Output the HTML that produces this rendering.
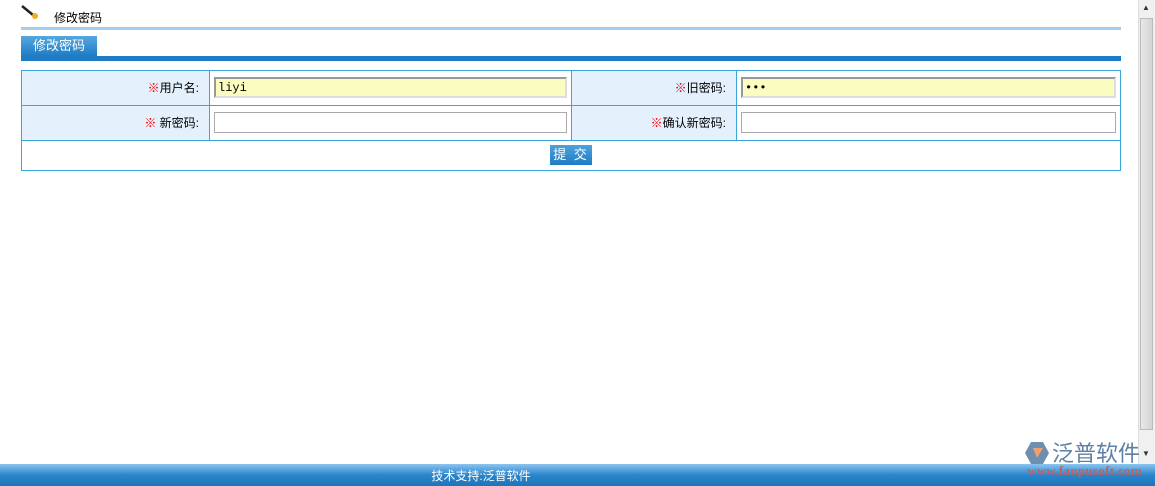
<!DOCTYPE html>
<html><head><meta charset="utf-8"><style>
body{margin:0;width:1155px;height:486px;position:relative;overflow:hidden;background:#fff;font-family:"Liberation Sans","Noto Sans CJK SC",sans-serif;font-size:12px;color:#000}
.a{position:absolute}
.lbl{background:#e4f1fd;text-align:right;box-sizing:border-box;padding-right:10px;line-height:34px}
.r{color:#e00}
input{position:absolute;box-sizing:border-box;height:21px;border:1px solid #aaa;font-family:"Liberation Mono",monospace;font-size:12px;padding:0 2px}
.y{background:#fafcc0;border:2px solid #999;border-right-color:#ddd;border-bottom-color:#ddd}
</style></head><body>
<svg class="a" style="left:20px;top:4px" width="20" height="16"><line x1="2" y1="2" x2="13" y2="11" stroke="#222" stroke-width="2.5"/><circle cx="15" cy="12" r="3" fill="#f0b020"/></svg>
<div class="a" style="left:54px;top:9px">修改密码</div>
<div class="a" style="left:21px;top:27px;width:1100px;height:3px;background:#a6cdec"></div>
<div class="a" style="left:21px;top:36px;width:76px;height:20px;background:linear-gradient(#55a7e0,#1f7cc4);color:#fff;font-size:13px;line-height:20px;text-align:center">修改密码</div>
<div class="a" style="left:21px;top:56px;width:1100px;height:5px;background:#1f7cc4"></div>
<div class="a" style="left:21px;top:70px;width:1100px;height:101px;box-sizing:border-box;border:1px solid #3aa6dc"></div>
<div class="a lbl" style="left:22px;top:71px;width:187px;height:34px"><span class="r">※</span>用户名:</div>
<div class="a lbl" style="left:572px;top:71px;width:164px;height:34px"><span class="r">※</span>旧密码:</div>
<div class="a lbl" style="left:22px;top:106px;width:187px;height:34px"><span class="r">※</span> 新密码:</div>
<div class="a lbl" style="left:572px;top:106px;width:164px;height:34px"><span class="r">※</span>确认新密码:</div>
<div class="a" style="left:21px;top:105px;width:1100px;height:1px;background:#3aa6dc"></div>
<div class="a" style="left:21px;top:140px;width:1100px;height:1px;background:#3aa6dc"></div>
<div class="a" style="left:209px;top:70px;width:1px;height:70px;background:#3aa6dc"></div>
<div class="a" style="left:571px;top:70px;width:1px;height:70px;background:#3aa6dc"></div>
<div class="a" style="left:736px;top:70px;width:1px;height:70px;background:#3aa6dc"></div>
<input class="y" style="left:214px;top:77px;width:353px" value="liyi">
<input class="y" style="left:741px;top:77px;width:375px" value="•••">
<input style="left:214px;top:112px;width:353px">
<input style="left:741px;top:112px;width:375px">
<div class="a" style="left:550px;top:145px;width:42px;height:20px;background:linear-gradient(#4ea2dc,#1f7cc4);color:#fff;font-size:13px;line-height:20px;text-align:center;letter-spacing:2px">提 交</div>
<div class="a" style="left:1138px;top:0;width:17px;height:464px;background:#f0f0f0;border-left:1px solid #ddd"></div>
<div class="a" style="left:1140px;top:18px;width:13px;height:412px;background:linear-gradient(90deg,#e8e8e8,#d4d4d4);border:1px solid #bbb;box-sizing:border-box"></div>
<div class="a" style="left:1142px;top:3px;font-size:8px;color:#333">▲</div>
<div class="a" style="left:1142px;top:449px;font-size:8px;color:#333">▼</div>
<div class="a" style="left:0;top:464px;width:1155px;height:22px;background:linear-gradient(#8cc4ee,#2a86cc 50%,#1f74b8)"></div>
<div class="a" style="left:430px;top:467px;width:102px;text-align:center;color:#fff;font-size:12px">技术支持:泛普软件</div>
<svg class="a" style="left:1025px;top:442px" width="24" height="22"><polygon points="6,0 18,0 24,11 18,22 6,22 0,11" fill="#6f8fb0"/><path d="M8,6 L18,6 L12,16 Z" fill="#f0a070"/></svg>
<div class="a" style="left:1052px;top:441px;font-size:22px;line-height:26px;color:#5f7fa5">泛普软件</div>
<div class="a" style="left:1027px;top:464px;font-family:'Liberation Serif',serif;font-size:13px;line-height:14px;color:#c06060;font-weight:bold;letter-spacing:0.3px">www.fanpusoft.com</div>
</body></html>
